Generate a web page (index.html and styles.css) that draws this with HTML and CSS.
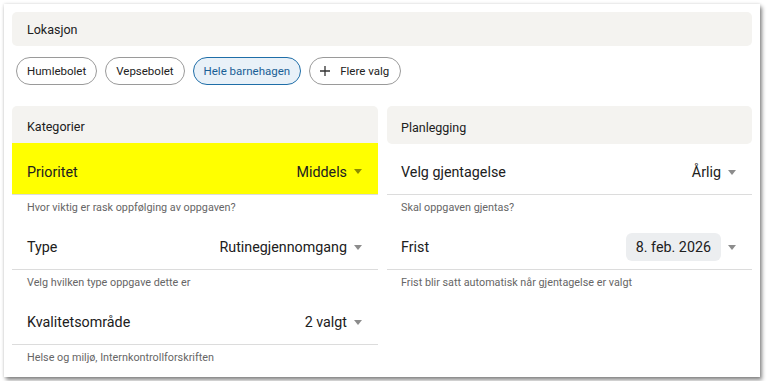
FILE: index.html
```html
<!DOCTYPE html>
<html lang="no">
<head>
  <meta charset="UTF-8" />
  <title>Oppgave</title>
  <link rel="stylesheet" href="styles.css">
</head>
<body>
  <div class="card">
    <div class="section-head wide">Lokasjon</div>
    <div class="chips">
      <span class="chip">Humlebolet</span>
      <span class="chip">Vepsebolet</span>
      <span class="chip active">Hele barnehagen</span>
      <span class="chip more">
        <svg width="12" height="12" viewBox="0 0 12 12"><path d="M6 1v10M1 6h10" stroke="#333" stroke-width="1.3" fill="none"/></svg>
        Flere valg
      </span>
    </div>

    <div class="columns">
      <div class="column">
        <div class="section-head left">Kategorier</div>
        <div class="field">
          <div class="row highlight">
            <span class="label">Prioritet</span>
            <span class="value">Middels <i class="arrow"></i></span>
          </div>
          <div class="helper">Hvor viktig er rask oppfølging av oppgaven?</div>
        </div>
        <div class="field">
          <div class="row">
            <span class="label">Type</span>
            <span class="value">Rutinegjennomgang <i class="arrow"></i></span>
          </div>
          <div class="helper">Velg hvilken type oppgave dette er</div>
        </div>
        <div class="field">
          <div class="row">
            <span class="label">Kvalitetsområde</span>
            <span class="value">2 valgt <i class="arrow"></i></span>
          </div>
          <div class="helper">Helse og miljø, Internkontrollforskriften</div>
        </div>
      </div>

      <div class="column">
        <div class="section-head right">Planlegging</div>
        <div class="field">
          <div class="row">
            <span class="label">Velg gjentagelse</span>
            <span class="value">Årlig <i class="arrow"></i></span>
          </div>
          <div class="helper">Skal oppgaven gjentas?</div>
        </div>
        <div class="field">
          <div class="row">
            <span class="label">Frist</span>
            <span class="value"><span class="date">8. feb. 2026</span> <i class="arrow"></i></span>
          </div>
          <div class="helper">Frist blir satt automatisk når gjentagelse er valgt</div>
        </div>
      </div>
    </div>
  </div>
</body>
</html>
```

FILE: styles.css
```css
body {
  margin: 0;
  padding: 4px;
  background: white;
  font-family: Roboto, "Liberation Sans", sans-serif;
  color: #202020;
}
.card {
  width: 740px;
  padding: 8px;
  background: white;
  box-shadow: 2px 3px 4px rgba(0, 0, 0, 0.45), 0 0 3px rgba(0, 0, 0, 0.15);
}
.section-head {
  background: #f4f3f0;
  border-radius: 5px;
  font-size: 12.5px;
  display: flex;
  align-items: center;
  padding-left: 15px;
}
.section-head.wide {
  height: 34px;
}
.section-head.left {
  height: 33px;
  padding-top: 4px;
  border-radius: 5px 5px 0 0;
}
.section-head.right {
  height: 34px;
  padding-top: 4px;
  padding-left: 14px;
}
.chips {
  display: flex;
  gap: 8px;
  margin: 11px 0 0 4px;
}
.chip {
  display: inline-flex;
  align-items: center;
  height: 26px;
  padding: 0 10px;
  border: 1px solid #9a9a9a;
  border-radius: 14px;
  font-size: 11.5px;
  color: #222;
}
.chip.active {
  background: #e9f1f8;
  border-color: #1f6ea8;
  color: #1a5f96;
}
.chip.more {
  padding-left: 9px;
  padding-right: 11px;
}
.chip.more svg {
  margin-right: 9px;
}
.columns {
  display: grid;
  grid-template-columns: 366px 365px;
  gap: 9px;
  margin-top: 21px;
}
.row {
  height: 44px;
  padding: 6px 16px 0 15px;
  border-bottom: 1px solid #dcdcdc;
  display: flex;
  align-items: center;
  justify-content: space-between;
  font-size: 14.3px;
}
.column + .column .row {
  padding-left: 14px;
}
.row.highlight {
  background: #ffff00;
  height: 45px;
}
.value {
  display: flex;
  align-items: center;
}
.arrow {
  display: inline-block;
  width: 0;
  height: 0;
  border-left: 4.5px solid transparent;
  border-right: 4.5px solid transparent;
  border-top: 5px solid rgba(0, 0, 0, 0.45);
  margin-left: 7px;
}
.date {
  background: #eceef0;
  border-radius: 6px;
  height: 28px;
  line-height: 28px;
  padding: 0 10px;
}
.helper {
  height: 24px;
  display: flex;
  align-items: center;
  padding-left: 15px;
  font-size: 10.8px;
  color: #666;
}
.column + .column .helper {
  padding-left: 14px;
}
```
